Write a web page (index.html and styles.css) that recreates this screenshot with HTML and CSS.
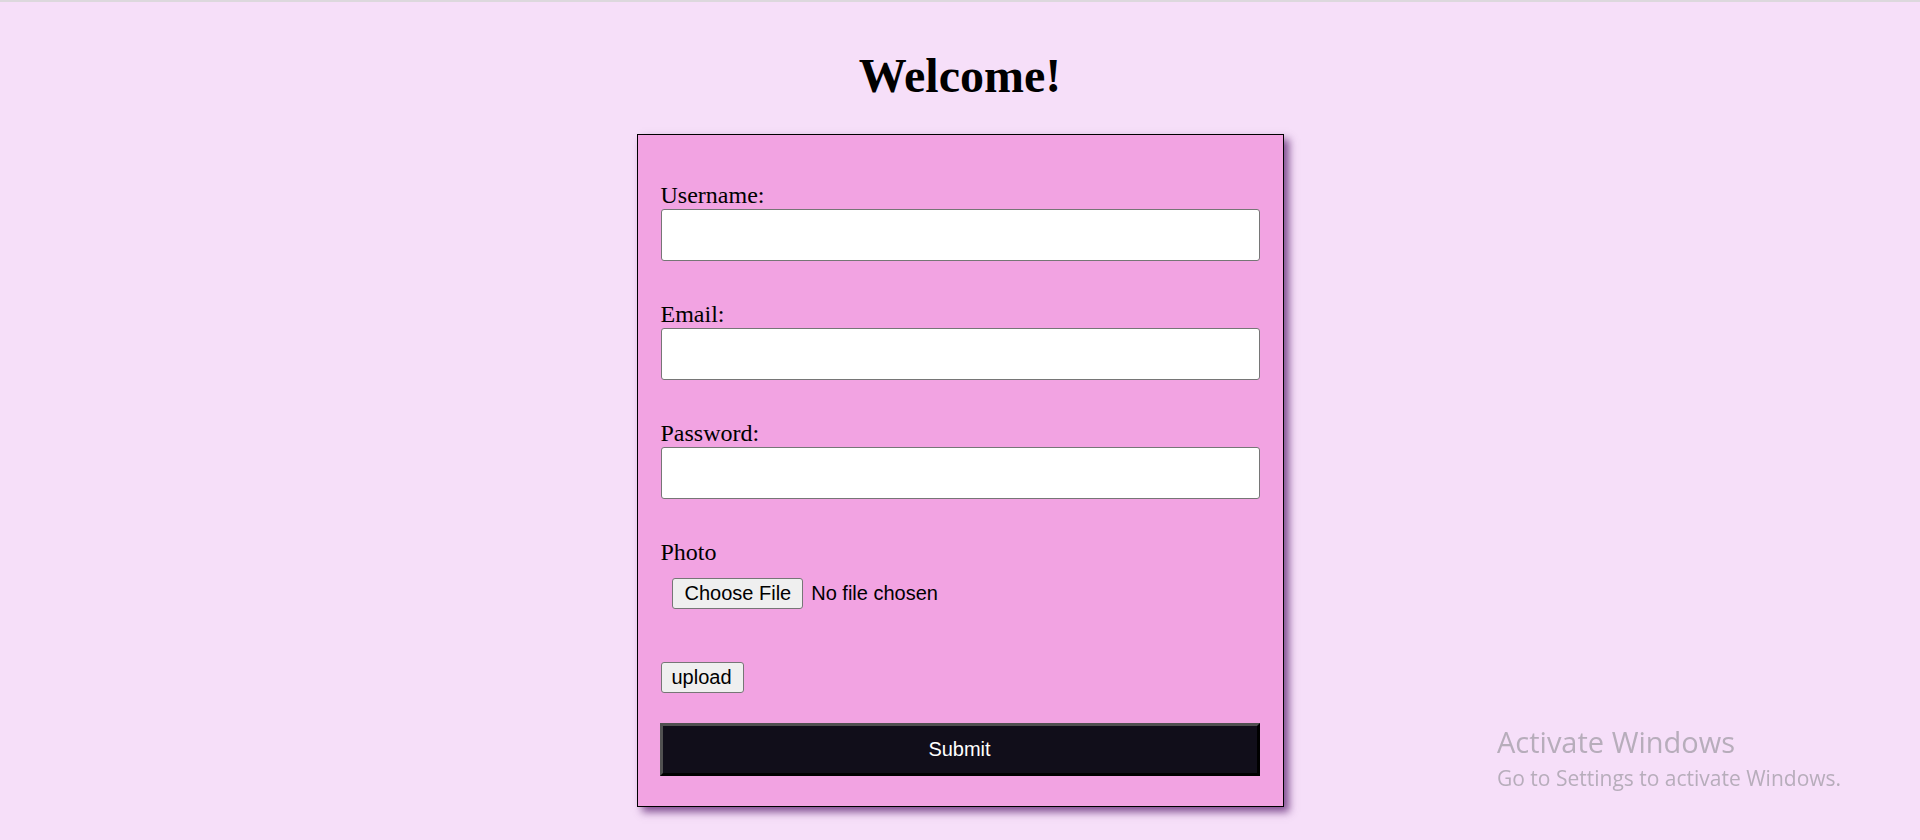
FILE: index.html
```html
<!DOCTYPE html>
<html lang="en">
<head>
<meta charset="utf-8">
<title>Welcome</title>
<link rel="stylesheet" href="styles.css">
</head>
<body>
<div class="topbar"></div>
<h1 class="title">Welcome!</h1>
<form class="card">
  <div class="field">
    <label class="label" for="username">Username:</label>
    <input class="text-input" type="text" id="username">
  </div>
  <div class="field">
    <label class="label" for="email">Email:</label>
    <input class="text-input" type="email" id="email">
  </div>
  <div class="field">
    <label class="label" for="password">Password:</label>
    <input class="text-input" type="password" id="password">
  </div>
  <div class="field photo">
    <label class="label">Photo</label>
    <div class="file-row">
      <button type="button" class="btn file-btn">Choose File</button>
      <span class="file-name">No file chosen</span>
    </div>
  </div>
  <div class="upload-row">
    <button type="button" class="btn">upload</button>
  </div>
  <button type="submit" class="submit">Submit</button>
</form>
<div class="watermark">
  <div class="wm-title">Activate Windows</div>
  <div class="wm-sub">Go to Settings to activate Windows.</div>
</div>
</body>
</html>
```
FILE: styles.css
```css
html, body {
  margin: 0;
  padding: 0;
}
body {
  background: #f6dff9;
  font-family: "Liberation Serif", "Times New Roman", serif;
  color: #000;
  min-height: 840px;
}
.topbar {
  height: 2px;
  background: #dcd8dd;
}
.title {
  margin: 46px 0 31px;
  font-size: 48px;
  font-weight: bold;
  text-align: center;
  line-height: normal;
}
.card {
  width: 599px;
  margin: 0 auto;
  padding: 46px 23px 30px 23px;
  background: #f2a3e2;
  border: 1px solid #000;
  box-shadow: 5px 5px 8px rgba(90, 30, 110, 0.75);
  display: flex;
  flex-direction: column;
}
.field {
  display: flex;
  flex-direction: column;
  margin-bottom: 39px;
}
.field.photo {
  margin-bottom: 53px;
}
.label {
  font-size: 24px;
  line-height: 28px;
  display: block;
}
.text-input {
  box-sizing: border-box;
  width: 599px;
  height: 52px;
  margin: 0;
  border: 1px solid #767676;
  border-radius: 3px;
  background: #fff;
  padding: 0 4px;
  font-size: 20px;
}
.file-row {
  display: flex;
  align-items: center;
  gap: 8px;
  margin: 12px 0 0 11px;
  font-family: "Liberation Sans", Arial, sans-serif;
  font-size: 20px;
}
.btn {
  font-family: "Liberation Sans", Arial, sans-serif;
  font-size: 20px;
  line-height: 23px;
  height: 31px;
  padding: 3px 11px 3px 10px;
  margin: 0;
  background: #efefef;
  color: #000;
  border: 1px solid #767676;
  border-radius: 3px;
}
.file-btn {
  padding: 3px 11px 3px 12px;
}
.file-name {
  color: #000;
}
.upload-row {
  display: flex;
  margin-bottom: 30px;
}
.submit {
  box-sizing: border-box;
  width: 600px;
  height: 53px;
  margin: 0 0 0 -1px;
  background: #110e1a;
  color: #fff;
  font-family: "Liberation Sans", Arial, sans-serif;
  font-size: 20px;
  border-style: solid;
  border-width: 3px;
  border-color: #505050 #000 #000 #505050;
}
.watermark {
  position: fixed;
  left: 1497px;
  top: 723px;
  font-family: "Open Sans", "Noto Sans", sans-serif;
  color: #b7adbb;
}
.wm-title {
  font-size: 29px;
  line-height: 38px;
}
.wm-sub {
  font-size: 21px;
  line-height: 34px;
}
```
